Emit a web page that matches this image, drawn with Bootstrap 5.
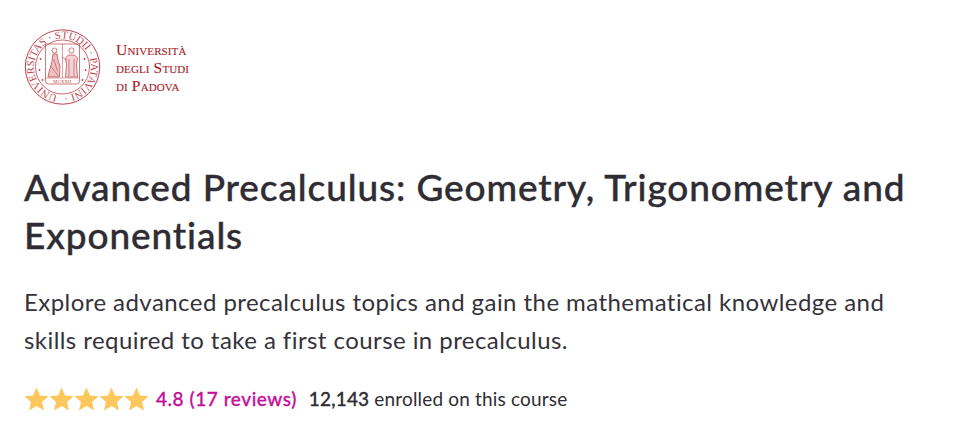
<!DOCTYPE html>
<html lang="en"><head><meta charset="utf-8"><title>Course</title>
<link href="https://cdn.jsdelivr.net/npm/bootstrap@5.3.0/dist/css/bootstrap.min.css" rel="stylesheet">
<style>
html,body{background:#fff;overflow:hidden}
.course-page{padding:29px 24px 0 24px;font-family:Lato,"Noto Sans",sans-serif;color:#2f2c33}
.brand-row{height:76px;gap:15px;margin-bottom:58px}
.brand-name{font-family:"Liberation Serif",serif;color:#ab1f2b;font-size:15.600px;line-height:18px;font-variant:small-caps;letter-spacing:.12px;padding-top:2px;-webkit-text-stroke:.15px #ab1f2b}
.course-title{font-size:37px;line-height:48px;font-weight:500;letter-spacing:.89px;margin:0 0 24px;color:#2f2c33;-webkit-text-stroke:.4px #2f2c33}
.course-lead{font-size:24px;line-height:38px;margin:0 0 27px;letter-spacing:.44px;color:#35323a}
.rating-line{font-size:19px;line-height:26px;gap:7px}
.rating-link{color:#c4109a;font-weight:500;letter-spacing:.55px;margin-right:5px;-webkit-text-stroke:.3px #c4109a}
.enrol-text{letter-spacing:.17px}
.enrol-strong{font-weight:500;-webkit-text-stroke:.3px #2f2c33}
</style></head>
<body>
<main class="course-page">
<div class="d-flex align-items-center brand-row">
<svg width="77" height="76" viewBox="0 0 76 76" fill="none" stroke="#bd3f49" role="img" aria-label="Seal">
<defs><path id="sealring" d="M38 66.500a28.500 28.500 0 1 1 .01 0"/></defs>
<circle cx="38" cy="38" r="37.200" stroke-width="1"/>
<circle cx="38" cy="38" r="27" stroke-width=".8"/>
<text font-family="Liberation Serif,serif" font-size="10.500" fill="#bd3f49" stroke="none"><textPath href="#sealring" startOffset="5" textLength="172">UNIVERSITAS · STUDII · PATAVINI ·</textPath></text>
<path d="M21 15h34v37q0 3-3 3H24q-3 0-3-3z" stroke-width=".7"/>
<path d="M38 15v34M21 49h34" stroke-width=".5"/>
<circle cx="16" cy="30" r=".9" fill="#bd3f49" stroke="none"/><circle cx="15" cy="41" r=".9" fill="#bd3f49" stroke="none"/><circle cx="18" cy="51" r=".9" fill="#bd3f49" stroke="none"/><circle cx="60" cy="30" r=".9" fill="#bd3f49" stroke="none"/><circle cx="61" cy="41" r=".9" fill="#bd3f49" stroke="none"/><circle cx="58" cy="51" r=".9" fill="#bd3f49" stroke="none"/>
<path d="M23.500 48c1-7 3-10 4-16l1-7h4l1 6 2 6-.5 11z" fill="#edc0c3" stroke-width=".7"/>
<circle cx="30" cy="21.500" r="2.500" stroke-width=".7" fill="#fff"/>
<path d="M41 48l1-12-1-7 3-3h6l3 3-1 7 1 12z" fill="#f2d2d4" stroke-width=".7"/>
<circle cx="47" cy="21.500" r="2.600" stroke-width=".7" fill="#fff"/>
<path d="M26 37l8 10M29 30l4 12M44.500 30v17M49.500 30v17M37 28l5 3" stroke-width=".6"/>
<text x="38" y="54" text-anchor="middle" font-family="Liberation Serif,serif" font-size="4.500" fill="#bd3f49" stroke="none" letter-spacing=".3">MCXXII</text>
</svg>
<div class="brand-name">Università<br>degli Studi<br>di Padova</div>
</div>
<h1 class="course-title">Advanced Precalculus: Geometry, Trigonometry and Exponentials</h1>
<p class="course-lead">Explore advanced precalculus topics and gain the mathematical knowledge and skills required to take a first course in precalculus.</p>
<div class="d-flex align-items-center rating-line">
<svg width="125" height="26" viewBox="0 0 125 26" fill="#fcc75c" aria-hidden="true"><path id="one" d="M12.500 1.500l3.500 8 8.500.7-6.500 5.700 2 8.600-7.500-4.600-7.500 4.600 2-8.600-6.500-5.700 8.500-.7z"/><use href="#one" x="25"/><use href="#one" x="50"/><use href="#one" x="75"/><use href="#one" x="100"/></svg>
<span class="rating-link">4.8 (17 reviews)</span>
<span class="enrol-text"><span class="enrol-strong">12,143</span> enrolled on this course</span>
</div>
</main>
</body></html>
